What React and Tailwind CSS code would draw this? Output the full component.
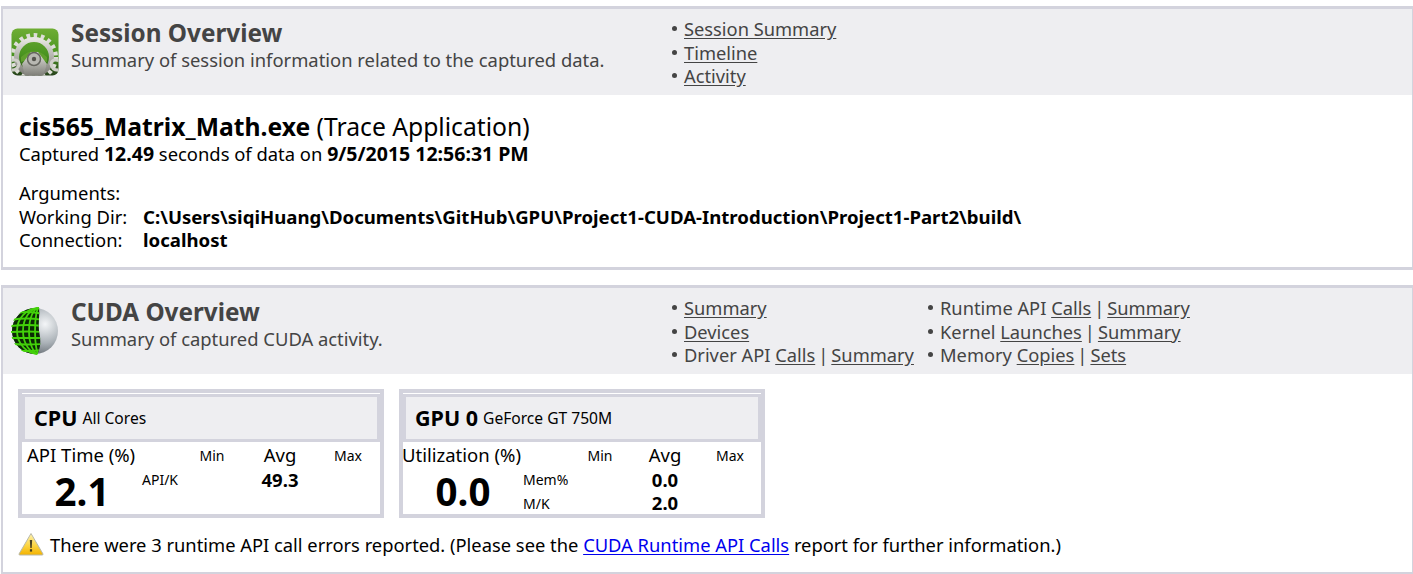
import React from 'react';

const Link = ({ children }) => (
  <a href="#" className="underline underline-offset-2 text-[#444]">{children}</a>
);

const Sep = () => <span className="mx-[3px]">|</span>;

const Bullet = ({ children }) => (
  <li className="flex h-[23.5px] items-center whitespace-pre">
    <span className="mr-[7px] h-[5px] w-[5px] rounded-full bg-[#444]" />
    <span>{children}</span>
  </li>
);

const GearIcon = () => (
  <svg width="48" height="48" viewBox="0 0 48 48" className="shrink-0">
    <defs>
      <linearGradient id="gearBg" x1="0" y1="0" x2="0" y2="1">
        <stop offset="0" stopColor="#6fae34" />
        <stop offset="0.55" stopColor="#4a9420" />
        <stop offset="1" stopColor="#26401c" />
      </linearGradient>
      <linearGradient id="gearMetal" x1="0" y1="0" x2="0" y2="1">
        <stop offset="0" stopColor="#e6e6e0" />
        <stop offset="1" stopColor="#7c7c76" />
      </linearGradient>
      <clipPath id="gearClip">
        <rect x="0.5" y="0.5" width="47" height="47" rx="6" />
      </clipPath>
    </defs>
    <g clipPath="url(#gearClip)">
      <rect width="48" height="48" fill="url(#gearBg)" />
      <circle cx="23" cy="29" r="21" fill="none" stroke="#dedeD8" strokeWidth="6" strokeDasharray="3.5 3.5" />
      <circle cx="23" cy="29" r="17.5" fill="none" stroke="url(#gearMetal)" strokeWidth="5" />
      <path d="M10 29 Q23 17 36 29 L36 34 Q23 28 10 34 Z" fill="#5f9f2c" />
      <path d="M11 36 L20 24 L27 24 L36 36 L32 48 L14 48 Z" fill="url(#gearMetal)" />
      <circle cx="23" cy="31" r="6.5" fill="#b8b8b2" stroke="#65655f" strokeWidth="1.5" />
      <circle cx="23" cy="31" r="2.2" fill="#55554f" />
      <path d="M-1 33 q8 -3 9 3 q-1 7 -9 6 M49 33 q-8 -3 -9 3 q1 7 9 6" fill="none" stroke="#cfcfc9" strokeWidth="3" />
    </g>
  </svg>
);

const GlobeIcon = () => (
  <svg width="48" height="48" viewBox="0 0 48 48" className="shrink-0">
    <defs>
      <radialGradient id="globeMetal" cx="0.72" cy="0.35" r="0.75">
        <stop offset="0" stopColor="#f4f6f8" />
        <stop offset="0.55" stopColor="#aab1b7" />
        <stop offset="1" stopColor="#5c6369" />
      </radialGradient>
      <clipPath id="globeLeft">
        <path d="M28 0 C14 0 0 8 0 24 C0 40 14 48 26 48 C30 40 30 34 28 24 C27 16 29 8 28 0 Z" />
      </clipPath>
    </defs>
    <circle cx="24" cy="24" r="23" fill="url(#globeMetal)" />
    <g clipPath="url(#globeLeft)">
      <circle cx="24" cy="24" r="23" fill="#0b2a05" />
      <g fill="none" stroke="#43d10a" strokeWidth="1.8">
        <ellipse cx="28" cy="24" rx="4" ry="23" />
        <ellipse cx="28" cy="24" rx="10" ry="23" />
        <ellipse cx="28" cy="24" rx="16" ry="23" />
        <ellipse cx="28" cy="24" rx="22" ry="23" />
        <path d="M0 7 Q16 3 32 7" />
        <path d="M0 13 Q16 10 32 13" />
        <path d="M0 19 Q16 17 32 19" />
        <path d="M0 25 Q16 24 32 25" />
        <path d="M0 31 Q16 31 32 31" />
        <path d="M0 37 Q16 38 32 37" />
        <path d="M0 43 Q16 45 32 43" />
      </g>
    </g>
  </svg>
);

const WarnIcon = () => (
  <svg width="26" height="24" viewBox="0 0 26 24" className="shrink-0">
    <defs>
      <linearGradient id="warnFill" x1="0" y1="0" x2="0" y2="1">
        <stop offset="0" stopColor="#fff3b0" />
        <stop offset="0.6" stopColor="#fbd23c" />
        <stop offset="1" stopColor="#f3b200" />
      </linearGradient>
    </defs>
    <path d="M13 1.5 L25 22 Q25.3 23 24 23 L2 23 Q0.7 23 1 22 Z" fill="url(#warnFill)" stroke="#b9b9a8" strokeLinejoin="round" />
    <path d="M11.8 8 H14.2 L13.7 16 H12.3 Z" fill="#4a4020" />
    <rect x="11.9" y="17.2" width="2.2" height="2.4" fill="#4a4020" />
  </svg>
);

const Header = ({ icon, title, subtitle, children }) => (
  <div className="flex h-[86px] bg-[#eeeef1] text-[#444]">
    <div className="flex w-[669px] shrink-0 items-center pl-[8px]">
      {icon}
      <div className="ml-[12px] -mt-[12px]">
        <div className="text-[24.3px] leading-[28px] font-bold">{title}</div>
        <div className="text-[18.4px] leading-[26px]">{subtitle}</div>
      </div>
    </div>
    {children}
  </div>
);

const Card = ({ name, sub, metric, value, rows, metricClass, labelWidth, avgWidth, valueClass, rowLabelWidth }) => (
  <div className="h-[129px] w-[366px] shrink-0 border-[4px] border-[#d3d3dd] pt-[1px] text-black">
    <div className="flex h-[48px] items-center gap-[5px] border-[3px] border-[#d3d3dd] bg-[#eeeef1] pl-[9px]">
      <span className="text-[21.5px] font-bold">{name}</span>
      <span className="mt-[1px] text-[15.6px]">{sub}</span>
    </div>
    <div className={`flex h-[26px] items-center ${metricClass} text-[18.5px] whitespace-nowrap`}>
      <span className={labelWidth}>{metric}</span>
      <span className="w-[36px] text-center text-[14px]">Min</span>
      <span className={`${avgWidth} text-center`}>Avg</span>
      <span className="w-[36px] text-center text-[14px]">Max</span>
    </div>
    <div className="flex">
      <div className={`${valueClass} text-center text-[38.5px] leading-[46px] font-bold`}>{value}</div>
      <div>
        {rows.map(r => (
          <div key={r[0]} className="flex h-[23.5px] items-center">
            <span className={`${rowLabelWidth} text-[14px]`}>{r[0]}</span>
            <span className="w-[40px] text-center text-[18.5px] font-bold">{r[1]}</span>
          </div>
        ))}
      </div>
    </div>
  </div>
);

const App = () => {
  return (
    <div className="h-[574px] w-[1413px] overflow-hidden bg-white pt-[6px] font-['Noto_Sans',sans-serif]">
      <section className="ml-[1px] h-[264px] w-[1414px] border-[3px] border-l-2 border-[#d3d3dd]">
        <Header
          icon={<GearIcon />}
          title="Session Overview"
          subtitle="Summary of session information related to the captured data."
        >
          <ul className="pt-[8px] text-[18.3px]">
            <Bullet><Link>Session Summary</Link></Bullet>
            <Bullet><Link>Timeline</Link></Bullet>
            <Bullet><Link>Activity</Link></Bullet>
          </ul>
        </Header>
        <div className="pl-[16px] pt-[17px] text-black">
          <div className="text-[24.7px] leading-[30px]"><b>cis565_Matrix_Math.exe</b> (Trace Application)</div>
          <div className="text-[18.4px] leading-[24px]">
            Captured <b className="text-[19.5px]">12.49</b> seconds of data on <b className="text-[19.5px]">9/5/2015 12:56:31 PM</b>
          </div>
          <div className="mt-[15px] text-[18.4px] leading-[23.5px]">
            <div>Arguments:</div>
            <div className="flex"><span className="w-[124px]">Working Dir:</span><b className="text-[18.6px]">C:\Users\siqiHuang\Documents\GitHub\GPU\Project1-CUDA-Introduction\Project1-Part2\build\</b></div>
            <div className="flex"><span className="w-[124px]">Connection:</span><b className="text-[18.6px]">localhost</b></div>
          </div>
        </div>
      </section>

      <section className="ml-[1px] mt-[15px] h-[290px] w-[1414px] border-[3px] border-l-2 border-[#d3d3dd]">
        <Header
          icon={<GlobeIcon />}
          title="CUDA Overview"
          subtitle="Summary of captured CUDA activity."
        >
          <ul className="w-[256px] pt-[8px] text-[18.3px]">
            <Bullet><Link>Summary</Link></Bullet>
            <Bullet><Link>Devices</Link></Bullet>
            <Bullet>Driver API <Link>Calls</Link><Sep /><Link>Summary</Link></Bullet>
          </ul>
          <ul className="pt-[8px] text-[18.3px]">
            <Bullet>Runtime API <Link>Calls</Link><Sep /><Link>Summary</Link></Bullet>
            <Bullet>Kernel <Link>Launches</Link><Sep /><Link>Summary</Link></Bullet>
            <Bullet>Memory <Link>Copies</Link><Sep /><Link>Sets</Link></Bullet>
          </ul>
        </Header>
        <div className="pl-[15px] pt-[15px]">
          <div className="flex gap-[15px]">
            <Card
              name="CPU"
              sub="All Cores"
              metric="API Time (%)"
              value="2.1"
              rows={[['API/K', '49.3']]}
              metricClass="pl-[5px]"
              labelWidth="w-[167px]"
              avgWidth="w-[100px]"
              valueClass="w-[120px]"
              rowLabelWidth="w-[118px]"
            />
            <Card
              name="GPU 0"
              sub="GeForce GT 750M"
              metric="Utilization (%)"
              value="0.0"
              rows={[['Mem%', '0.0'], ['M/K', '2.0']]}
              metricClass="-ml-[1px]"
              labelWidth="w-[180px]"
              avgWidth="w-[94px]"
              valueClass="w-[120px]"
              rowLabelWidth="w-[122px]"
            />
          </div>
          <div className="mt-[12px] flex items-center gap-[6px] text-[18.33px] text-black">
            <WarnIcon />
            <span className="mt-[1px]">
              There were 3 runtime API call errors reported. (Please see the{' '}
              <a href="#" className="text-[#0000ee] underline underline-offset-2">CUDA Runtime API Calls</a>
              {' '}report for further information.)
            </span>
          </div>
        </div>
      </section>
    </div>
  );
};

export default App;
